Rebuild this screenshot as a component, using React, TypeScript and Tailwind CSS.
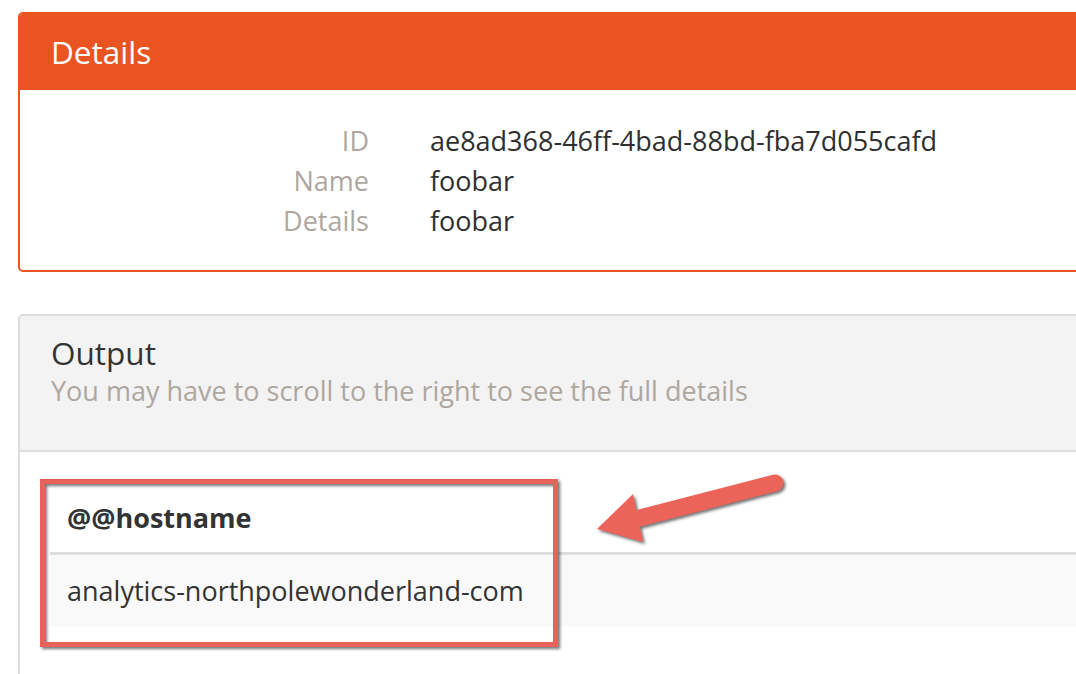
const rows = [
  { label: "ID", value: "ae8ad368-46ff-4bad-88bd-fba7d055cafd" },
  { label: "Name", value: "foobar" },
  { label: "Details", value: "foobar" },
];

export default function App() {
  return (
    <div
      className="relative w-[1076px] h-[674px] overflow-hidden bg-white pt-3 pl-[18px]"
      style={{ fontFamily: '"Open Sans", "DejaVu Sans", sans-serif' }}
    >
      {/* Details panel */}
      <div className="w-[1120px] rounded-[5px] border-2 border-[#e95420] overflow-hidden">
        <div className="h-[76px] bg-[#e95420] pl-[31px] flex items-center">
          <h2 className="text-white text-[31.5px] font-medium leading-none">Details</h2>
        </div>
        <div className="pt-[31px] pb-[29px]">
          {rows.map((r) => (
            <div key={r.label} className="flex h-[40px] items-center text-[27px]">
              <div className="w-[349px] text-right text-[#aea79f]">{r.label}</div>
              <div className="pl-[61px] text-[#2f2f2f]">{r.value}</div>
            </div>
          ))}
        </div>
      </div>

      {/* Output panel */}
      <div className="mt-[42px] w-[1120px] rounded-[5px] border-2 border-[#dddddd] overflow-hidden">
        <div className="h-[136px] bg-[#f3f3f3] border-b-2 border-[#dddddd] pl-[31px] pt-[17px]">
          <div className="text-[31.5px] text-[#333333] leading-[40px]">Output</div>
          <div className="text-[27px] text-[#aea79f] leading-[36px]">
            You may have to scroll to the right to see the full details
          </div>
        </div>
        <div className="bg-white pt-[33px] pl-[30px] h-[240px]">
          <div className="w-[1080px]">
            <div className="h-[70px] flex items-center pl-[17px] border-b-[3px] border-[#dddddd] text-[27px] font-bold text-[#333333]">
              @@hostname
            </div>
            <div className="h-[72px] flex items-center pl-[17px] bg-[#f9f9f9] text-[27px] text-[#333333]">
              analytics-northpolewonderland-com
            </div>
          </div>
        </div>
      </div>

      {/* annotation: highlight box */}
      <div className="absolute left-[40px] top-[479px] w-[518px] h-[168px] border-[5px] border-[#e9625a] [filter:drop-shadow(2px_2px_1.5px_rgba(0,0,0,0.55))]" />

      {/* annotation: arrow */}
      <svg
        className="absolute left-0 top-0 pointer-events-none [filter:drop-shadow(2px_2px_1.5px_rgba(0,0,0,0.55))]"
        width="1076"
        height="674"
        viewBox="0 0 1076 674"
      >
        <line x1="636" y1="519" x2="775" y2="483" stroke="#ec6459" strokeWidth="17" strokeLinecap="round" />
        <polygon points="597,529 633,494 643,542" fill="#ec6459" />
      </svg>
    </div>
  );
}
